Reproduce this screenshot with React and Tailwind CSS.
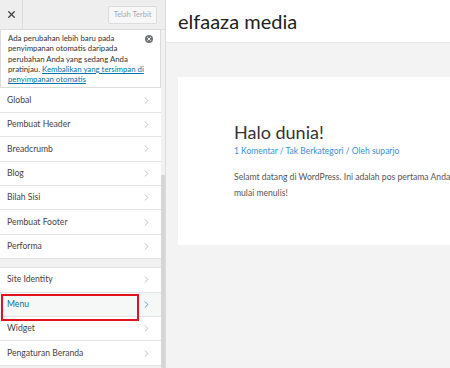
import { ChevronRight, X } from "lucide-react";

const groupOne = ["Global", "Pembuat Header", "Breadcrumb", "Blog", "Bilah Sisi", "Pembuat Footer", "Performa"];
const groupTwo = ["Site Identity", "Menu", "Widget", "Pengaturan Beranda"];

function Row({ label }) {
  const active = label === "Menu";
  return (
    <div
      className={
        "relative flex h-[24.4px] items-center justify-between border-b border-[#e2e4e7] pl-[7px] pr-[9px] " +
        (active ? "bg-[#f6f7f7] text-[#0073aa]" : "bg-white text-[#444]")
      }
    >
      <span className="text-[8.6px]">{label}</span>
      <ChevronRight size={11} strokeWidth={1.5} className={active ? "text-[#0073aa]" : "text-[#a0a5aa]"} />
      {active && (
        <div className="absolute left-[1px] top-[1px] z-10 h-[27px] w-[138px] border-2 border-[#e3101e]" />
      )}
    </div>
  );
}

export default function App() {
  return (
    <div className="flex h-[368px] w-[450px] overflow-hidden bg-[#f3f3f3]" style={{ fontFamily: 'Lato, "Noto Sans", sans-serif' }}>
      {/* customizer sidebar */}
      <div className="flex w-[166px] shrink-0 flex-col border-r border-[#dcdcde] bg-[#f1f1f1]">
        <div className="flex h-[30px] shrink-0 items-center border-b border-[#dcdcde] bg-[#eeeeee]">
          <div className="flex h-full w-[23px] items-center justify-center border-r border-[#dcdcde]">
            <X size={11} strokeWidth={3} className="text-[#444]" />
          </div>
          <div className="ml-auto mr-[8px] flex h-[18px] w-[49px] items-center justify-center rounded-[2px] border border-[#dcdcde] bg-[#f7f7f7] text-[7.5px] text-[#a7aaad]">
            Telah Terbit
          </div>
        </div>
        <div className="flex min-h-0 flex-1">
          <div className="min-w-0 flex-1">
            <div className="relative whitespace-nowrap border border-t-0 border-[#dcdcde] bg-white pb-[3px] pl-[7px] pr-[14px] pt-[3px] text-[7.8px] leading-[10.3px] text-[#333] shadow-[0_1px_1px_rgba(0,0,0,0.04)]">
              Ada perubahan lebih baru pada
              <br />
              penyimpanan otomatis daripada
              <br />
              perubahan Anda yang sedang Anda
              <br />
              pratinjau.{" "}
              <span className="text-[#0073aa] underline">
                Kembalikan yang tersimpan di
                <br />
                penyimpanan otomatis
              </span>
              <div className="absolute right-[7px] top-[5px] flex h-[8px] w-[8px] items-center justify-center rounded-full bg-[#72777c]">
                <X size={6} strokeWidth={3.5} className="text-white" />
              </div>
            </div>
            <div>
              {groupOne.map((l) => (
                <Row key={l} label={l} />
              ))}
            </div>
            <div className="h-[8px]" />
            <div className="border-t border-[#e2e4e7]">
              {groupTwo.map((l) => (
                <Row key={l} label={l} />
              ))}
            </div>
          </div>
          <div className="flex w-[4px] flex-col bg-[#f1f1f1]">
            <div className="mt-[145px] flex-1 bg-[#d6d6d6]" />
          </div>
        </div>
      </div>

      {/* site preview */}
      <div className="flex min-w-0 flex-1 flex-col">
        <div className="flex h-[43px] shrink-0 items-center border-b border-[#e6e6e6] bg-white pl-[12px]">
          <span className="text-[20px] text-[#222]">elfaaza media</span>
        </div>
        <div className="ml-[12px] mt-[34px] h-[168px] bg-white pl-[56px] pt-[44px]">
          <div className="text-[18px] leading-[22px] text-[#333]">Halo dunia!</div>
          <div className="mt-[2px] whitespace-nowrap text-[8.5px] text-[#3a8fd6]">
            1 Komentar / Tak Berkategori / Oleh suparjo
          </div>
          <div className="mt-[11px] whitespace-nowrap text-[8.6px] leading-[16px] text-[#555]">
            Selamt datang di WordPress. Ini adalah pos pertama Anda. Sunting atau hapus, lalu
            <br />
            mulai menulis!
          </div>
        </div>
      </div>
    </div>
  );
}
